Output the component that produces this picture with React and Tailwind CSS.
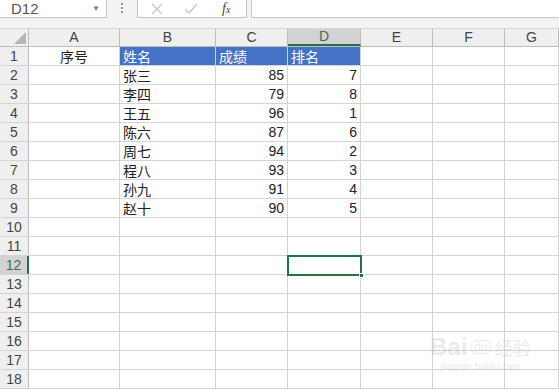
import React from 'react';

const cols = [
  { key: 'A', w: 'w-[91px]' },
  { key: 'B', w: 'w-[96px]' },
  { key: 'C', w: 'w-[72px]' },
  { key: 'D', w: 'w-[73px]' },
  { key: 'E', w: 'w-[72px]' },
  { key: 'F', w: 'w-[72px]' },
  { key: 'G', w: 'flex-1' },
];

const people = [
  ['张三', 85, 7],
  ['李四', 79, 8],
  ['王五', 96, 1],
  ['陈六', 87, 6],
  ['周七', 94, 2],
  ['程八', 93, 3],
  ['孙九', 91, 4],
  ['赵十', 90, 5],
];

const cjk = { fontFamily: '"Noto Sans CJK SC", "Liberation Sans", sans-serif' };

const Cell = ({ w, className = '', children }) => (
  <div className={`${w} shrink-0 h-full border-r border-[#d4d4d4] flex items-center px-[3px] overflow-hidden whitespace-nowrap text-[14px] text-[#222] ${className}`}>
    {children}
  </div>
);

const Row = ({ n, cells, active }) => (
  <div className="flex h-[19px] border-b border-[#d4d4d4]">
    <div
      className={`w-[29px] shrink-0 h-full flex items-center justify-center text-[14px] border-r ${
        active
          ? 'bg-[#d2d2d2] text-[#3f6f55] border-r-2 border-r-[#217346]'
          : 'bg-[#efefef] text-[#444] border-[#bdbdbd]'
      }`}
    >
      {n}
    </div>
    {cols.map((c, i) => (
      <Cell key={c.key} w={c.w} className={cells[i]?.cls || ''}>
        {cells[i]?.v}
      </Cell>
    ))}
  </div>
);

const App = () => {
  const rows = [];
  rows.push([
    { v: <span style={cjk} className="w-full text-center block">序号</span> },
    { v: <span style={cjk}>姓名</span>, cls: 'bg-[#4472c4] text-white' },
    { v: <span style={cjk}>成绩</span>, cls: 'bg-[#4472c4] text-white' },
    { v: <span style={cjk}>排名</span>, cls: 'bg-[#4472c4] text-white' },
  ]);
  people.forEach(([name, score, rank]) => {
    rows.push([
      {},
      { v: <span style={cjk}>{name}</span> },
      { v: score, cls: 'justify-end' },
      { v: rank, cls: 'justify-end' },
    ]);
  });
  for (let i = 10; i <= 18; i++) rows.push([]);

  return (
    <div
      className="w-[559px] h-[389px] overflow-hidden bg-white relative"
      style={{ fontFamily: '"Liberation Sans", Arial, sans-serif' }}
    >
      {/* formula bar */}
      <div className="h-[29px] bg-[#f3f3f3] border-b border-[#d6d6d6] flex items-start">
        <div className="w-[107px] h-[18px] bg-white border-r border-b border-[#c6c6c6] flex items-center justify-between pl-[11px] pr-[6px]">
          <span className="text-[15px] text-[#555] leading-none">D12</span>
          <span className="text-[8px] text-[#777]">▼</span>
        </div>
        <div className="w-[30px] flex flex-col items-center gap-[2px] pt-[3px]">
          <span className="w-[2px] h-[2px] bg-[#999]" />
          <span className="w-[2px] h-[2px] bg-[#999]" />
          <span className="w-[2px] h-[2px] bg-[#999]" />
        </div>
        <div className="w-[110px] h-[18px] bg-white border-l border-r border-b border-[#c6c6c6] flex items-center">
          <svg width="12" height="12" viewBox="0 0 12 12" className="ml-[13px]">
            <path d="M1 1L11 11M11 1L1 11" stroke="#c4c4c4" strokeWidth="1.3" fill="none" />
          </svg>
          <svg width="14" height="12" viewBox="0 0 14 12" className="ml-[21px]">
            <path d="M1 6L5 10L13 1" stroke="#c4c4c4" strokeWidth="1.4" fill="none" />
          </svg>
          <span className="ml-[24px] text-[14px] italic text-[#444] leading-none" style={{ fontFamily: '"Liberation Serif", serif' }}>
            f<span className="text-[10px]">x</span>
          </span>
        </div>
        <div className="ml-[4px] flex-1 h-[18px] bg-white border-l border-b border-[#c6c6c6]" />
      </div>

      {/* column headers */}
      <div className="flex h-[18px] bg-[#efefef] border-b border-[#bdbdbd]">
        <div className="w-[29px] shrink-0 h-full border-r border-[#bdbdbd] flex items-end justify-end p-[2px]">
          <svg width="12" height="12" viewBox="0 0 12 12">
            <path d="M12 0L12 12L0 12Z" fill="#b5b5b5" />
          </svg>
        </div>
        {cols.map((c) => (
          <div
            key={c.key}
            className={`${c.w} shrink-0 h-full border-r border-[#bdbdbd] flex items-center justify-center text-[14px] ${
              c.key === 'D' ? 'bg-[#d2d2d2] text-[#3f6f55] border-b-2 border-b-[#217346]' : 'text-[#444]'
            }`}
          >
            {c.key}
          </div>
        ))}
      </div>

      {/* grid */}
      <div>
        {rows.map((cells, i) => (
          <Row key={i} n={i + 1} cells={cells} active={i + 1 === 12} />
        ))}
      </div>

      {/* selection D12 */}
      <div className="absolute left-[287px] top-[255px] w-[75px] h-[21px] border-2 border-[#217346]">
        <div className="absolute -right-[4px] -bottom-[4px] w-[5px] h-[5px] bg-[#217346] border border-white" />
      </div>

      {/* watermark */}
      <div className="absolute left-[430px] top-[335px] flex flex-col items-center opacity-20 pointer-events-none">
        <div className="flex items-center gap-[4px] text-[#999]">
          <span className="text-[24px] font-bold leading-none">Bai</span>
          <span className="text-[12px] border border-[#999] rounded-[6px] px-[2px] leading-none">du</span>
          <span className="text-[18px] leading-none" style={cjk}>经验</span>
        </div>
        <span className="text-[10px] text-[#999]">jingyan.baidu.com</span>
      </div>
    </div>
  );
};

export default App;
